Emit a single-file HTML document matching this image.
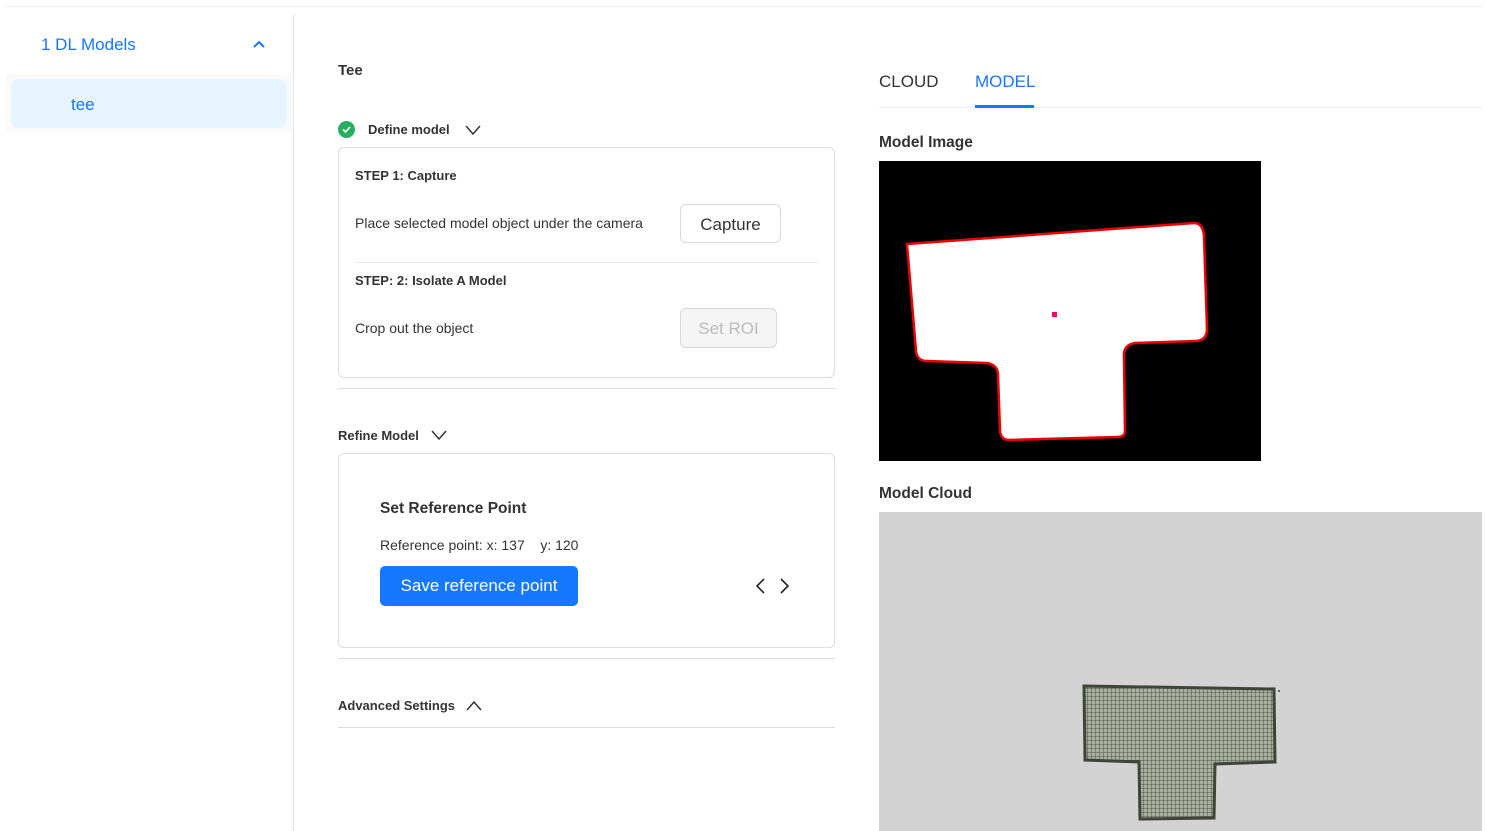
<!DOCTYPE html><html><head><meta charset="utf-8"><style>
*{margin:0;padding:0;box-sizing:border-box}
body{width:1485px;height:831px;background:#fff;font-family:"Liberation Sans",sans-serif;position:relative;overflow:hidden;color:#222}
.a{position:absolute}
.t{font-size:14px;color:#333}
.b{font-weight:bold;font-size:13px}
.btn{position:absolute;border:1px solid #d9d9d9;border-radius:6px;background:#fff;text-align:center;font-size:17px}
</style></head><body>
<div class="a" style="left:6px;top:6px;width:1476px;height:1px;background:#eee"></div>
<div class="a" style="left:293px;top:14px;width:1px;height:817px;background:#e5e5e5"></div>
<div class="a" style="left:41px;top:35px;font-size:17px;color:#1677ff">1 DL Models</div>
<svg class="a" style="left:252px;top:39px" width="14" height="10"><path d="M2 8L7 3L12 8" stroke="#1677ff" stroke-width="2" fill="none"/></svg>
<div class="a" style="left:6px;top:74px;width:286px;height:59px;background:#fafafa"></div>
<div class="a" style="left:11px;top:79px;width:276px;height:49px;background:#e6f4ff;border-radius:8px"></div>
<div class="a" style="left:71px;top:95px;font-size:17px;color:#1677ff">tee</div>

<div class="a" style="left:338px;top:62px;font-size:15px;font-weight:bold;color:#333">Tee</div>
<svg class="a" style="left:338px;top:121px" width="17" height="17"><circle cx="8.5" cy="8.5" r="8.5" fill="#27ae60"/><path d="M5 8.5L7.5 11L12 6" stroke="#fff" stroke-width="1.6" fill="none"/></svg>
<div class="a t b" style="left:368px;top:122px">Define model</div>
<svg class="a" style="left:465px;top:124px" width="16" height="12"><path d="M1 2L8 10L15 2" stroke="#333" stroke-width="1.5" fill="none"/></svg>
<div class="a" style="left:338px;top:147px;width:497px;height:231px;border:1px solid #ddd;border-radius:6px"></div>
<div class="a t b" style="left:355px;top:168px">STEP 1: Capture</div>
<div class="a t" style="left:355px;top:215px">Place selected model object under the camera</div>
<div class="btn" style="left:680px;top:204px;width:101px;height:39px;line-height:39px;color:#333">Capture</div>
<div class="a" style="left:355px;top:262px;width:463px;height:1px;background:#e8e8e8"></div>
<div class="a t b" style="left:355px;top:273px">STEP: 2: Isolate A Model</div>
<div class="a t" style="left:355px;top:320px">Crop out the object</div>
<div class="btn" style="left:680px;top:308px;width:97px;height:40px;line-height:40px;color:#bbb;background:#f5f5f5">Set ROI</div>
<div class="a" style="left:338px;top:388px;width:497px;height:1px;background:#ddd"></div>

<div class="a t b" style="left:338px;top:428px">Refine Model</div>
<svg class="a" style="left:431px;top:429px" width="16" height="12"><path d="M1 2L8 10L15 2" stroke="#333" stroke-width="1.5" fill="none"/></svg>
<div class="a" style="left:338px;top:453px;width:497px;height:195px;border:1px solid #ddd;border-radius:6px"></div>
<div class="a" style="left:380px;top:500px;font-size:15.5px;font-weight:bold;color:#333">Set Reference Point</div>
<div class="a t" style="left:380px;top:537px">Reference point: x: 137 &nbsp;&nbsp; y: 120</div>
<div class="a" style="left:380px;top:566px;width:198px;height:40px;background:#1677ff;border-radius:5px;color:#fff;font-size:17px;text-align:center;line-height:40px">Save reference point</div>
<svg class="a" style="left:752px;top:577px" width="40" height="18"><path d="M12 2L5 9L12 16M29 2L36 9L29 16" stroke="#222" stroke-width="1.6" fill="none"/></svg>
<div class="a" style="left:338px;top:658px;width:497px;height:1px;background:#ddd"></div>
<div class="a t b" style="left:338px;top:698px">Advanced Settings</div>
<svg class="a" style="left:466px;top:700px" width="16" height="12"><path d="M1 10L8 2L15 10" stroke="#333" stroke-width="1.5" fill="none"/></svg>
<div class="a" style="left:338px;top:727px;width:497px;height:1px;background:#ddd"></div>

<div class="a" style="left:879px;top:72px;font-size:17px;color:#333">CLOUD</div>
<div class="a" style="left:975px;top:72px;font-size:17px;color:#1677ff">MODEL</div>
<div class="a" style="left:879px;top:107px;width:603px;height:1px;background:#eee"></div>
<div class="a" style="left:975px;top:105px;width:59px;height:3px;background:#1677ff"></div>
<div class="a" style="left:879px;top:134px;font-size:15.5px;font-weight:bold;color:#333">Model Image</div>
<svg class="a" style="left:879px;top:161px" width="382" height="300"><rect width="382" height="300" fill="#000"/>
<path d="M28 83L315 62Q324 62 325 75L328 168Q328 180 316 180L256 182Q244 184 245 196L246 270Q246 276 238 276L130 279Q122 279 121 270L119 214Q119 204 108 202L48 200Q38 200 37 190L29 95Q28 85 28 83Z" fill="#fff" stroke="#e00" stroke-width="2.5"/>
<rect x="173" y="151" width="5" height="5" fill="#f06"/></svg>
<div class="a" style="left:879px;top:485px;font-size:15.5px;font-weight:bold;color:#333">Model Cloud</div>
<svg class="a" style="left:879px;top:512px" width="603" height="319"><rect width="603" height="319" fill="#d3d3d3"/>
<defs><pattern id="p" width="4" height="4" patternUnits="userSpaceOnUse"><rect width="4" height="4" fill="#a9b0a0"/><path d="M0 0H4M0 0V4" stroke="#4e5648" stroke-width="1"/></pattern></defs>
<path d="M205 174L395 177L396 250L336 252L335 306L261 307L260 250L206 248Z" fill="url(#p)" stroke="#3e4438" stroke-width="3"/>
<rect x="399" y="178" width="2" height="2" fill="#666"/></svg>
</body></html>
